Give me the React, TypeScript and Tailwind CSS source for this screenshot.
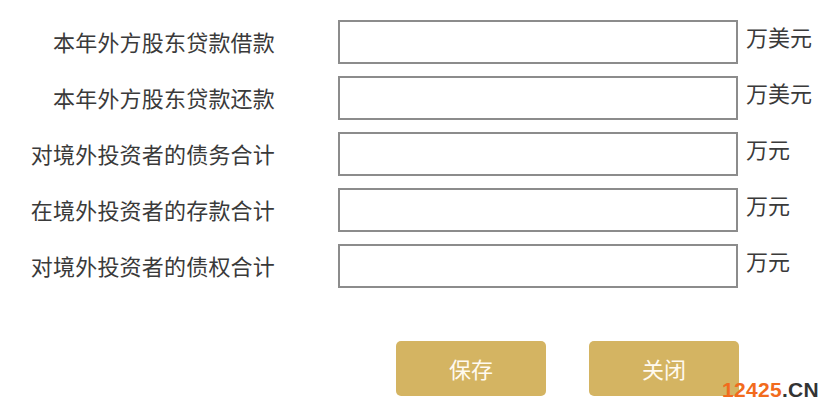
const rows = [
  { label: '本年外方股东贷款借款', unit: '万美元' },
  { label: '本年外方股东贷款还款', unit: '万美元' },
  { label: '对境外投资者的债务合计', unit: '万元' },
  { label: '在境外投资者的存款合计', unit: '万元' },
  { label: '对境外投资者的债权合计', unit: '万元' },
];

export default function App() {
  return (
    <div
      className="relative w-[830px] h-[413px] overflow-hidden bg-white text-[#3a3a3a]"
      style={{ fontFamily: '"Microsoft YaHei", "Noto Sans CJK SC", "Noto Sans", sans-serif' }}
    >
      <div className="flex flex-col gap-[12px] pt-[20px]">
        {rows.map((r) => (
          <div key={r.label} className="flex h-[44px] items-center">
            <div className="w-[275px] shrink-0 pb-[3px] text-right text-[22px] leading-none tracking-[0.2px]">
              {r.label}
            </div>
            <input
              type="text"
              className="ml-[63px] h-[44px] w-[400px] shrink-0 border-2 border-[#8c8c8c] bg-white px-2 text-[18px] outline-none"
            />
            <div className="ml-[8px] self-start text-[22px] leading-[32px]">{r.unit}</div>
          </div>
        ))}
      </div>

      <div className="mt-[53px] flex gap-[43px] pl-[396px]">
        <button className="h-[55px] w-[150px] rounded-[5px] bg-[#d4b462] text-[22px] text-[#fffaf0]">
          保存
        </button>
        <button className="h-[55px] w-[150px] rounded-[5px] bg-[#d4b462] text-[22px] text-[#fffaf0]">
          关闭
        </button>
      </div>

      <div
        className="absolute left-[722px] top-[377px] text-[21px] font-bold leading-[26px] tracking-[0.3px]"
        style={{ fontFamily: '"Liberation Sans", Arial, sans-serif' }}
      >
        <span className="text-[#f26b1d]">12425</span>
        <span className="text-[#333]">.CN</span>
      </div>
    </div>
  );
}
